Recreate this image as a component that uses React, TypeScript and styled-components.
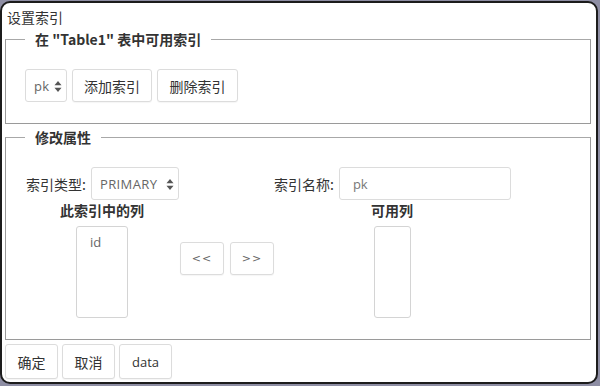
import React from "react";
import styled, { createGlobalStyle } from "styled-components";

const Global = createGlobalStyle`
  html, body { margin: 0; padding: 0; }
  body {
    background: #8e8ea4;
    width: 600px;
    height: 386px;
    overflow: hidden;
    font-family: "Noto Sans CJK SC", "Open Sans", sans-serif;
    color: #333;
  }
  * { box-sizing: border-box; }
`;

const Dialog = styled.div`
  margin-top: 1px;
  width: 598px;
  height: 383px;
  background: #fff;
  border: 2px solid #1c1c1c;
  border-radius: 10px;
  padding: 0 5px 0 3px;
  display: flex;
  flex-direction: column;
`;

const Title = styled.div`
  height: 26px;
  padding: 3px 0 0 2px;
  font-size: 14px;
  line-height: 22px;
  color: #333;
`;

const Group = styled.fieldset<{ $h: number; $mt?: number }>`
  margin: ${(p) => p.$mt ?? 0}px 0 0 0;
  padding: 0;
  height: ${(p) => p.$h}px;
  border: 1px solid #9a9a9a;
  border-top-color: #a8a8a8;
  min-width: 0;
`;

const Legend = styled.legend`
  margin-left: 19px;
  padding: 0 10px;
  font-size: 14px;
  line-height: 20px;
  font-weight: bold;
  color: #333;
`;

const Row = styled.div<{ $top: number; $left: number }>`
  display: flex;
  align-items: center;
  margin-top: ${(p) => p.$top}px;
  padding-left: ${(p) => p.$left}px;
  gap: 5px;
`;

const Button = styled.button<{ $w: number; $h?: number }>`
  width: ${(p) => p.$w}px;
  height: ${(p) => p.$h ?? 33}px;
  padding: 0;
  border: 1px solid #dcdcdc;
  border-radius: 3px;
  background: #fff;
  box-shadow: 0 1px 1px rgba(0, 0, 0, 0.04);
  font-family: "Noto Sans CJK SC", "Open Sans", sans-serif;
  font-size: 14px;
  color: #333;
  cursor: pointer;
`;

const SelectBox = styled.div<{ $w: number }>`
  position: relative;
  width: ${(p) => p.$w}px;
  height: 33px;
  border: 1px solid #dcdcdc;
  border-radius: 3px;
  background: #fff;
  display: flex;
  align-items: center;
  padding-left: 8px;
  font-family: "Open Sans", "Noto Sans CJK SC", sans-serif;
  font-size: 13px;
  letter-spacing: 0.4px;
  color: #666;
`;

const Arrows = styled.svg`
  position: absolute;
  right: 4px;
  top: 11px;
`;

const Label = styled.span`
  font-size: 14px;
  line-height: 20px;
  color: #333;
`;

const TextInput = styled.div`
  width: 172px;
  height: 33px;
  border: 1px solid #dcdcdc;
  border-radius: 3px;
  padding-left: 13px;
  display: flex;
  align-items: center;
  font-family: "Open Sans", sans-serif;
  font-size: 13px;
  color: #777;
`;

const PropGrid = styled.div`
  display: grid;
  grid-template-columns: 248px 1fr;
  margin-top: 20px;
  padding-left: 20px;
`;

const Cell = styled.div`
  display: flex;
  align-items: center;
  gap: 5px;
`;

const ColumnsRow = styled.div`
  display: flex;
  align-items: flex-start;
  margin-top: 0;
`;

const ColGroup = styled.div<{ $w: number; $ml: number }>`
  width: ${(p) => p.$w}px;
  margin-left: ${(p) => p.$ml}px;
  display: flex;
  flex-direction: column;
  align-items: center;
  gap: 6px;
`;

const ColLabel = styled.div`
  font-size: 14px;
  line-height: 20px;
  font-weight: bold;
  color: #333;
  white-space: nowrap;
`;

const ListBox = styled.div<{ $w: number }>`
  width: ${(p) => p.$w}px;
  height: 92px;
  border: 1px solid #d4d4d4;
  border-radius: 3px;
  background: #fff;
  padding: 6px 0 0 13px;
  font-family: "Open Sans", sans-serif;
  font-size: 13px;
  line-height: 18px;
  color: #666;
`;

const MoveButtons = styled.div`
  display: flex;
  gap: 6px;
  margin: 42px 0 0 28px;
`;

const MoveButton = styled(Button)`
  font-family: "DejaVu Sans", sans-serif;
  font-size: 11px;
  color: #666;
  letter-spacing: 1px;
`;

const Footer = styled.div`
  display: flex;
  gap: 4px;
  margin-top: 4px;
`;

const DataButton = styled(Button)`
  font-family: "Open Sans", sans-serif;
  font-size: 13px;
`;

function Spinner() {
  return (
    <Arrows width="8" height="11" viewBox="0 0 8 11">
      <path d="M4 0 L7.5 4.2 L0.5 4.2 Z" fill="#555" />
      <path d="M4 11 L7.5 6.8 L0.5 6.8 Z" fill="#555" />
    </Arrows>
  );
}

export default function App() {
  return (
    <>
      <Global />
      <Dialog>
        <Title>设置索引</Title>
        <Group $h={95}>
          <Legend>在 "Table1" 表中可用索引</Legend>
          <Row $top={20} $left={19}>
            <SelectBox $w={42}>
              pk
              <Spinner />
            </SelectBox>
            <Button $w={80}>添加索引</Button>
            <Button $w={81}>删除索引</Button>
          </Row>
        </Group>
        <Group $h={213} $mt={3}>
          <Legend>修改属性</Legend>
          <PropGrid>
            <Cell>
              <Label>索引类型:</Label>
              <SelectBox $w={88}>
                PRIMARY
                <Spinner />
              </SelectBox>
            </Cell>
            <Cell>
              <Label>索引名称:</Label>
              <TextInput>pk</TextInput>
            </Cell>
          </PropGrid>
          <ColumnsRow>
            <ColGroup $w={100} $ml={46}>
              <ColLabel>此索引中的列</ColLabel>
              <ListBox $w={52}>id</ListBox>
            </ColGroup>
            <MoveButtons>
              <MoveButton $w={44}>&lt;&lt;</MoveButton>
              <MoveButton $w={44}>&gt;&gt;</MoveButton>
            </MoveButtons>
            <ColGroup $w={60} $ml={88}>
              <ColLabel>可用列</ColLabel>
              <ListBox $w={37} />
            </ColGroup>
          </ColumnsRow>
        </Group>
        <Footer>
          <Button $w={53} $h={35}>确定</Button>
          <Button $w={53} $h={35}>取消</Button>
          <DataButton $w={53} $h={35}>data</DataButton>
        </Footer>
      </Dialog>
    </>
  );
}
